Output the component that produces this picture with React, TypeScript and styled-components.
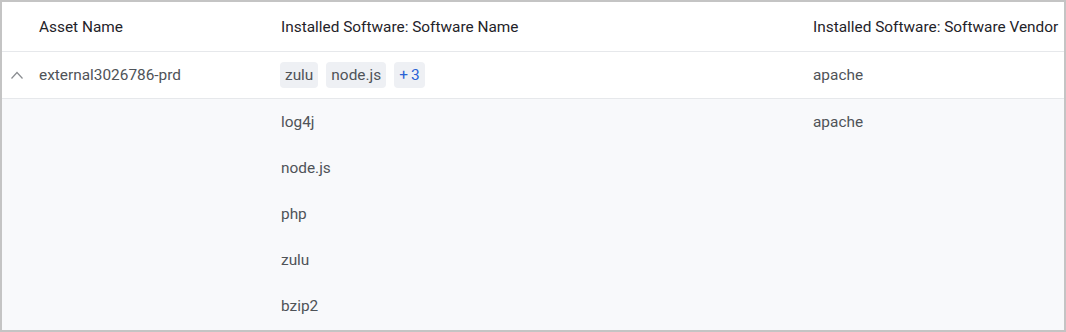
import React from "react";
import styled, { createGlobalStyle } from "styled-components";

const Global = createGlobalStyle`
  html, body { margin: 0; padding: 0; background: #ffffff; }
  body { font-family: Roboto, "Noto Sans", Arial, sans-serif; }
  * { box-sizing: border-box; }
`;

const Frame = styled.div`
  width: 1066px;
  height: 332px;
  border: 2px solid #c4c4c4;
  background: #ffffff;
  display: flex;
  flex-direction: column;
  overflow: hidden;
`;

const Row = styled.div<{ $h: number; $bg?: string; $line?: boolean }>`
  display: grid;
  grid-template-columns: 29px 242px 532px 1fr;
  height: ${(p) => p.$h}px;
  flex: none;
  background: ${(p) => p.$bg ?? "#ffffff"};
  border-bottom: ${(p) => (p.$line ? "1px solid #e6e8eb" : "none")};
`;

const Cell = styled.div<{ $head?: boolean }>`
  display: flex;
  align-items: center;
  gap: 9px;
  padding-left: 8px;
  font-size: 15.4px;
  color: ${(p) => (p.$head ? "#1f2329" : "#4f5358")};
  white-space: nowrap;
`;

const ToggleCell = styled.div`
  display: flex;
  align-items: center;
  justify-content: center;
  padding-left: 1px;
`;

const Chip = styled.span<{ $more?: boolean }>`
  display: inline-flex;
  align-items: center;
  height: 26px;
  padding: 0 5px;
  border-radius: 4px;
  background: #eef0f4;
  color: ${(p) => (p.$more ? "#2a63d4" : "#4f5358")};
  font-size: 15.4px;
  margin-left: -1px;
`;

const Sub = styled.div`
  flex: 1;
  background: #f8f9fb;
  display: flex;
  flex-direction: column;
`;

const Chevron = () => (
  <svg width="14" height="10" viewBox="0 0 14 10" fill="none">
    <polyline points="1.5,8.5 7,2.5 12.5,8.5" stroke="#8a8d91" strokeWidth="1.2" fill="none" />
  </svg>
);

const subRows: [string, string][] = [
  ["log4j", "apache"],
  ["node.js", ""],
  ["php", ""],
  ["zulu", ""],
  ["bzip2", ""],
];

export default function App() {
  return (
    <>
      <Global />
      <Frame>
        <Row $h={50} $line>
          <ToggleCell />
          <Cell $head>Asset Name</Cell>
          <Cell $head>Installed Software: Software Name</Cell>
          <Cell $head>Installed Software: Software Vendor</Cell>
        </Row>
        <Row $h={47} $line>
          <ToggleCell>
            <Chevron />
          </ToggleCell>
          <Cell>external3026786-prd</Cell>
          <Cell>
            <Chip>zulu</Chip>
            <Chip>node.js</Chip>
            <Chip $more>+{"\u2009"}3</Chip>
          </Cell>
          <Cell>apache</Cell>
        </Row>
        <Sub>
          {subRows.map(([name, vendor]) => (
            <Row key={name} $h={46} $bg="transparent">
              <ToggleCell />
              <Cell />
              <Cell>{name}</Cell>
              <Cell>{vendor}</Cell>
            </Row>
          ))}
        </Sub>
      </Frame>
    </>
  );
}
